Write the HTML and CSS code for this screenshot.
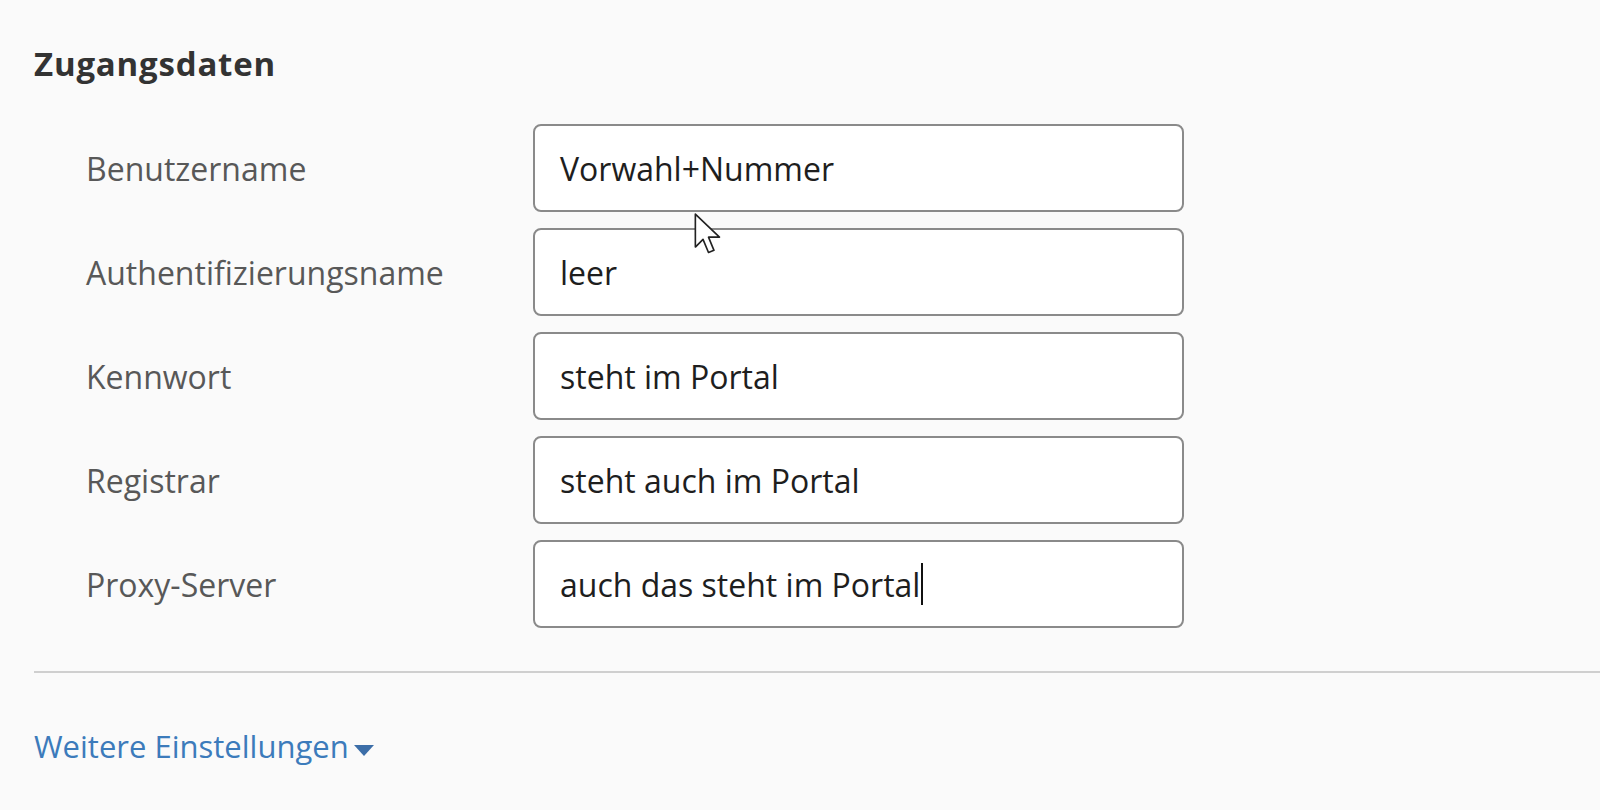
FILE: index.html
```html
<!DOCTYPE html>
<html lang="de">
<head>
<meta charset="utf-8">
<link rel="stylesheet" href="styles.css">
</head>
<body>
<div class="page">
  <h2 class="title">Zugangsdaten</h2>
  <div class="form">
    <div class="row"><label class="label">Benutzername</label><div class="input">Vorwahl+Nummer</div></div>
    <div class="row"><label class="label">Authentifizierungsname</label><div class="input">leer</div></div>
    <div class="row"><label class="label">Kennwort</label><div class="input">steht im Portal</div></div>
    <div class="row"><label class="label">Registrar</label><div class="input">steht auch im Portal</div></div>
    <div class="row"><label class="label">Proxy-Server</label><div class="input">auch das steht im Portal<span class="caret"></span></div></div>
  </div>
  <hr class="sep">
  <a class="more" href="#">Weitere Einstellungen<span class="tri"></span></a>
</div>
<svg class="pointer" width="31" height="46" viewBox="0 0 14 21">
  <path d="M1 1 L1 16 L4.5 12.5 L7 18.5 L9.5 17.5 L7 11.5 L12 11.5 Z" fill="#fff" stroke="#222" stroke-width="0.75" stroke-linejoin="round"/>
</svg>
</body>
</html>
```
FILE: styles.css
```css
html, body {
  margin: 0;
  padding: 0;
  background: #fafafa;
}
body {
  font-family: "Open Sans", "Lato", sans-serif;
  width: 1600px;
  height: 810px;
  overflow: hidden;
  position: relative;
}
.page {
  padding: 42px 0 0 34px;
}
.title {
  margin: 0;
  font-size: 33px;
  font-weight: 700;
  color: #333;
  line-height: 44px;
  letter-spacing: 0.8px;
}
.form {
  margin-top: 38px;
  display: flex;
  flex-direction: column;
  gap: 16px;
  padding-left: 52px;
}
.row {
  display: flex;
  align-items: center;
}
.label {
  width: 447px;
  font-size: 32px;
  color: #585858;
}
.input {
  box-sizing: border-box;
  width: 651px;
  height: 88px;
  border: 2px solid #8a8a8a;
  border-radius: 8px;
  background: #fff;
  padding: 0 25px;
  display: flex;
  align-items: center;
  font-size: 32px;
  color: #1e1e1e;
}
.caret {
  display: inline-block;
  width: 2px;
  height: 42px;
  background: #111;
  margin-left: 1px;
}
.sep {
  margin: 43px 0 0 0;
  border: 0;
  height: 2px;
  background: #cfcfcf;
}
.more {
  display: inline-flex;
  align-items: center;
  margin-top: 52px;
  font-size: 31px;
  color: #3c7bbb;
  text-decoration: none;
}
.tri {
  display: inline-block;
  width: 0;
  height: 0;
  border-left: 10px solid transparent;
  border-right: 10px solid transparent;
  border-top: 11px solid #3c6ea8;
  margin-left: 5px;
  margin-top: 8px;
}
.pointer {
  position: absolute;
  left: 693px;
  top: 212px;
}
```
